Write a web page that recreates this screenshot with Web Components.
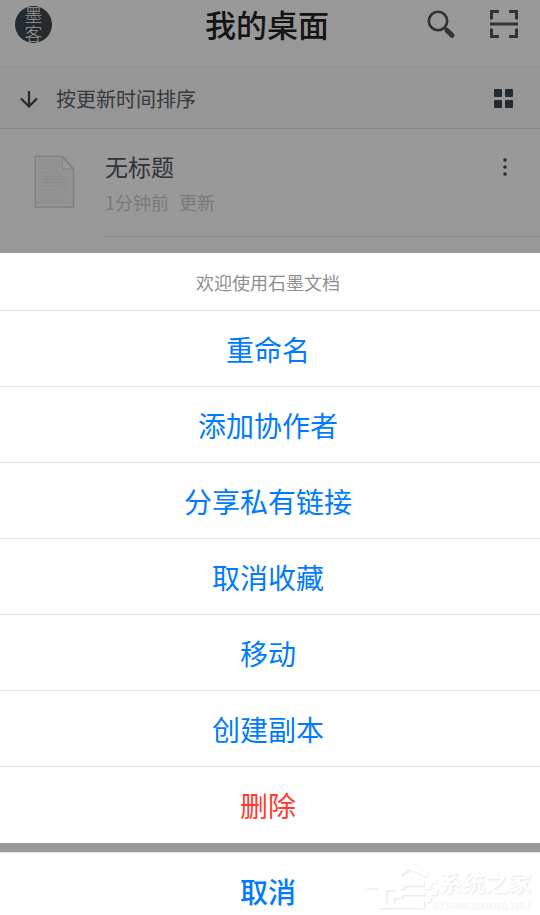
<!DOCTYPE html>
<html lang="zh-CN">
<head>
<meta charset="utf-8">
<meta name="viewport" content="width=device-width, initial-scale=1">
<title>我的桌面</title>
<style>
html, body { margin: 0; height: 100%; overflow: hidden; background: #fff; }
body { font-family: "Noto Sans CJK SC", sans-serif; }
</style>
</head>
<body>
<desk-screen>
  <desk-header slot="page" label="我的桌面" avatar="墨客"></desk-header>
  <sort-bar slot="page">按更新时间排序</sort-bar>
  <doc-list slot="page">
    <doc-row><span slot="name">无标题</span><span slot="time">1分钟前</span><span slot="state">更新</span></doc-row>
  </doc-list>
  <action-sheet slot="sheet">
    <span slot="label">欢迎使用石墨文档</span>
    <action-item>重命名</action-item>
    <action-item>添加协作者</action-item>
    <action-item>分享私有链接</action-item>
    <action-item>取消收藏</action-item>
    <action-item>移动</action-item>
    <action-item>创建副本</action-item>
    <action-item kind="danger">删除</action-item>
    <action-item kind="cancel" slot="cancel">取消</action-item>
    <site-mark slot="mark"></site-mark>
  </action-sheet>
</desk-screen>
<script>
function define(name, html) {
  const template = document.createElement('template');
  template.innerHTML = '<style>:host,*{box-sizing:border-box}button{font:inherit;color:inherit;background:none;border:0;margin:0;padding:0;cursor:pointer}svg{display:block}</style>' + html;
  customElements.define(name, class extends HTMLElement {
    constructor() {
      super();
      this.attachShadow({ mode: 'open' }).append(template.content.cloneNode(true));
    }
    connectedCallback() {
      this.shadowRoot.querySelectorAll('[data-attr]').forEach(el => {
        el.textContent = this.getAttribute(el.dataset.attr) || '';
      });
    }
  });
}

define('desk-screen', `
<style>
:host{display:block;min-height:100vh}
.scrim{position:fixed;inset:0;background:rgba(0,0,0,.4)}
.sheet{position:fixed;left:0;right:0;bottom:0}
</style>
<main><slot name="page"></slot></main>
<div class="scrim"></div>
<div class="sheet"><slot name="sheet"></slot></div>`);

define('desk-header', `
<style>
:host{display:block}
header{display:grid;grid-template-columns:1fr auto 1fr;height:66px;padding:0 21px 18px 15px;align-items:center}
.avatar{width:37px;height:37px;border-radius:50%;background:#3c464b;color:#fff;display:flex;align-items:center;justify-content:center;font:300 18px/19px "Noto Sans CJK SC",sans-serif}
.avatar span{width:18px;word-break:break-all}
h1{margin:0;font-size:31px;line-height:40px;font-weight:500;color:#222}
.tools{display:flex;justify-content:flex-end;gap:32px}
</style>
<header>
  <button class="avatar" aria-label="账户"><span data-attr="avatar"></span></button>
  <h1 data-attr="label"></h1>
  <div class="tools">
    <button aria-label="搜索"><svg width="30" height="30" viewBox="0 0 30 30" fill="none" stroke="#555"><circle cx="11" cy="12" r="9.200" stroke-width="2.600"/><path d="M17.500 18.500l3 3" stroke-width="3"/><path d="M20 21.500l5 4.800" stroke-width="5" stroke-linecap="round"/></svg></button>
    <button aria-label="扫一扫"><svg width="30" height="30" viewBox="0 0 30 30" fill="none" stroke="#555" stroke-width="3"><path d="M10 2.500H2.500v8M20 2.500h7.500v8M10 27.500H2.500v-8M20 27.500h7.500v-8M1 15h28"/></svg></button>
  </div>
</header>`);

define('sort-bar', `
<style>
:host{display:flex;align-items:center;height:63px;padding:2px 26px 0 20px;background:#fafafa;border-top:1px solid #f4f4f4;border-bottom:1px solid #e4e4e4;color:#5a5f64;font-size:20px;line-height:30px}
.sort{display:flex;align-items:center;gap:18px}
.grid{margin-left:auto}
</style>
<button class="sort"><svg width="18" height="18" viewBox="0 0 18 18" fill="none" stroke="#3c464b" stroke-width="2.200"><path d="M9 1v15M1 8.500l8 8 8-8"/></svg><slot></slot></button>
<button class="grid" aria-label="网格视图"><svg width="20" height="20" viewBox="0 0 20 20" fill="#3c464b"><rect x="0" y="0" width="8" height="8" rx="1"/><rect x="11" y="0" width="8" height="8" rx="1"/><rect x="0" y="11" width="8" height="8" rx="1"/><rect x="11" y="11" width="8" height="8" rx="1"/></svg></button>`);

define('doc-list', `<style>:host{display:block}</style><slot></slot>`);

define('doc-row', `
<style>
:host{display:flex;align-items:flex-start;padding-left:34px}
.icon{margin-top:26px}
.body{flex:1;display:flex;justify-content:space-between;height:108px;margin-left:29px;border-bottom:1px solid #e8e8e8;padding:20px 32px 0 0}
.name{font-size:23px;line-height:34px;color:#50565a}
.meta{display:flex;gap:10px;font-size:18px;line-height:26px;color:#ccc;margin-top:6px}
.info{padding-left:1px}
.more{height:22px;margin-top:7px}
</style>
<svg class="icon" width="41" height="54" viewBox="0 0 41 54"><path d="M1.500 1.500h27l11 12v38.500h-38z" fill="#fff" stroke="#d4d4d4" stroke-width="1.500"/><path d="M3.500 3.500h23v12h11v34h-34z" fill="#f3f3f3"/><path d="M28 2v12h11z" fill="#fff" stroke="#d0d0d0"/><path d="M8 13.500h8M8 17.500h8M8 21.500h24M8 24.500h24M8 27.500h24M8 30.500h24M8 35.500h9" stroke="#eaeaea"/></svg>
<div class="body">
  <div class="info"><div class="name"><slot name="name"></slot></div><div class="meta"><slot name="time"></slot><slot name="state"></slot></div></div>
  <button class="more" aria-label="更多"><svg width="6" height="20" viewBox="0 0 6 20" fill="#444b50"><circle cx="3" cy="3" r="1.800"/><circle cx="3" cy="10" r="1.800"/><circle cx="3" cy="17" r="1.800"/></svg></button>
</div>`);

define('action-sheet', `
<style>
:host{display:block}
.group{background:#fff}
.label{height:57px;padding-right:4px;display:flex;align-items:center;justify-content:center;font-size:18px;color:#8f8f8f}
.cancel{position:relative;margin-top:9px;background:#fff}
.mark{position:absolute;right:9px;bottom:5px;pointer-events:none}
</style>
<section class="group"><div class="label"><slot name="label"></slot></div><slot></slot></section>
<div class="cancel"><slot name="cancel"></slot><div class="mark"><slot name="mark"></slot></div></div>`);

define('action-item', `
<style>
:host{display:block}
button{display:block;width:100%;height:76px;border-top:1px solid #e6e6e6;padding-right:4px;font-size:28px;line-height:40px;color:#007aff}
:host([kind=danger]) button{color:#ff3b30;height:77px}
:host([kind=cancel]) button{height:63px;padding:18px 4px 4px 0;font-weight:500}
</style>
<button><slot></slot></button>`);

define('site-mark', `
<style>
:host{display:flex;align-items:flex-end;color:#fff;filter:drop-shadow(1px 1px 1px rgba(0,0,0,.11))}
.words{margin-left:-9px;display:flex;flex-direction:column;align-items:flex-end}
.zh{font-size:23px;line-height:34px;font-weight:700}
.en{font:11px/12px "Liberation Serif",serif}
</style>
<svg width="76" height="50" viewBox="0 0 76 50" fill="#fff" fill-rule="evenodd"><path d="M2 25L14 23 46 2 63 13v4L46 9 36 16l24 5v5H41l-3 5h23v4H39l-3 5h24v8H14V28H2zM22 30v15h3V34h6v-4zM30 38v6h5l3-6z"/><path d="M61 23h6v6h-6zM68 19h4v4h-4zM67 29h6v6h-6zM62 37h5v5h-5z"/></svg>
<div class="words"><div class="zh">系统之家</div><div class="en">XITONGZHIJIA.NET</div></div>`);
</script>
</body>
</html>
